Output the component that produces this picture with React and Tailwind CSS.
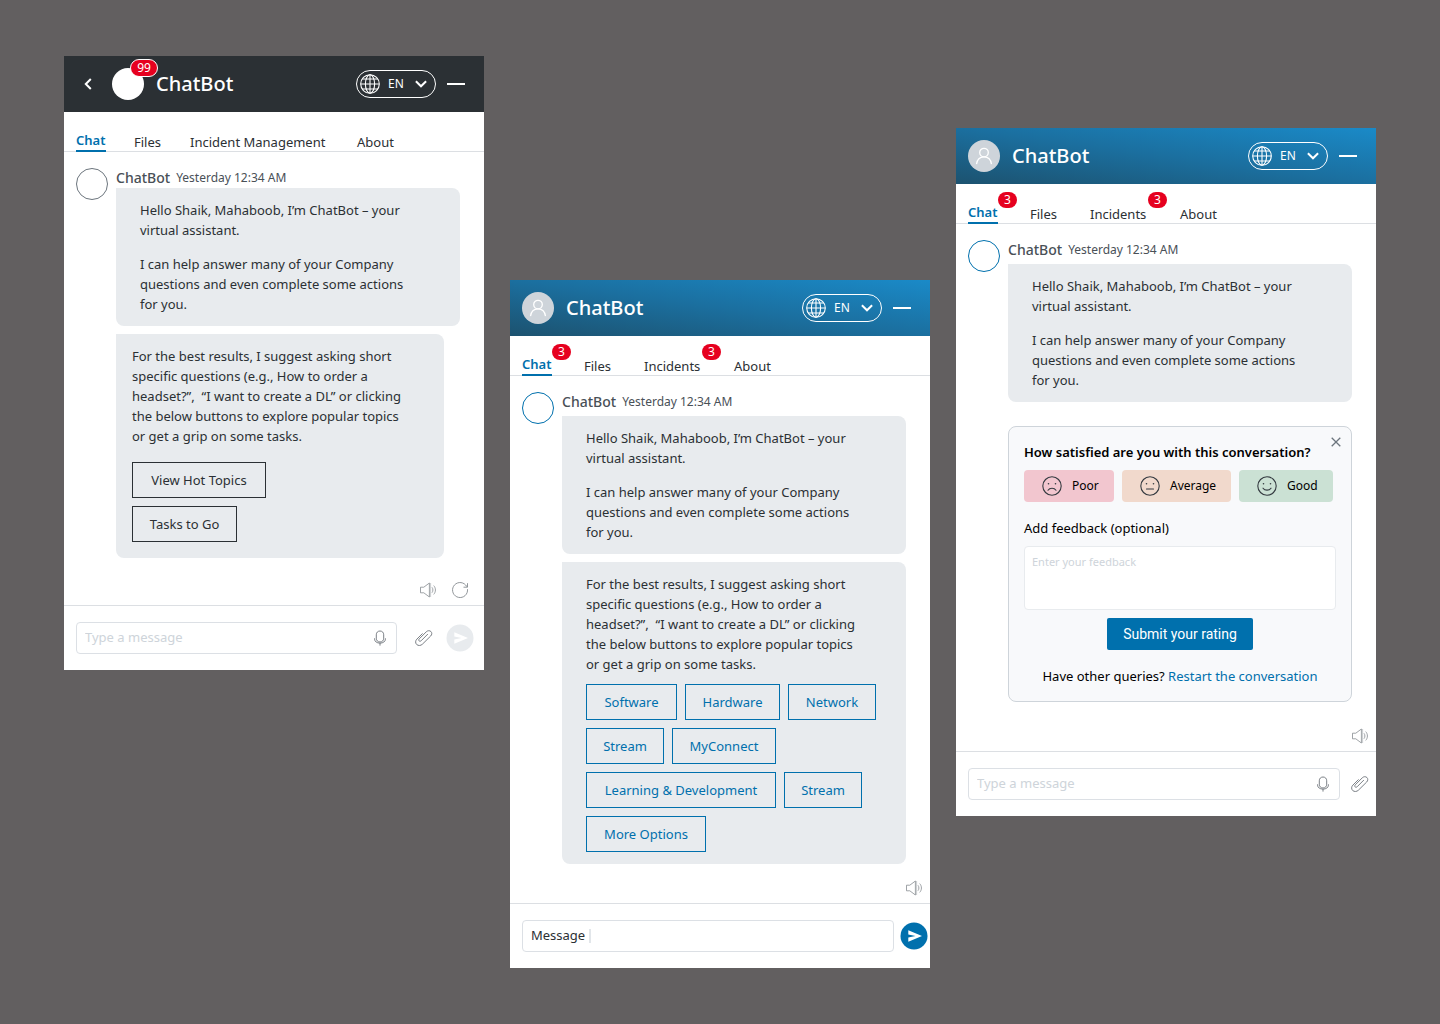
import React from 'react';

function GlobeIcon() {
  return (
    <svg width="20" height="20" viewBox="0 0 20 20" fill="none" stroke="currentColor" strokeWidth="1.1" aria-hidden="true" className="shrink-0">
      <circle cx="10" cy="10" r="9.3" />
      <ellipse cx="10" cy="10" rx="4.6" ry="9.3" />
      <path d="M10 0.7v18.6M0.7 10h18.6M2.4 5h15.2M2.4 15h15.2" />
    </svg>
  );
}

function SpeakerIcon() {
  return (
    <svg width="16" height="16" viewBox="0 0 16 16" fill="none" stroke="currentColor" strokeWidth="0.8" aria-hidden="true">
      <path d="M0.5 5.2h3.3L9.4 1v14L3.8 10.8H0.5z" />
      <path d="M10.6 1v14" opacity="0.55" />
      <path d="M12 5.3c1.2 1.5 1.2 3.9 0 5.4M13.7 3.6c2.3 2.5 2.3 6.3 0 8.8" />
    </svg>
  );
}

function RefreshIcon() {
  return (
    <svg width="16" height="16" viewBox="0 0 16 16" fill="none" stroke="currentColor" strokeWidth="0.9" aria-hidden="true">
      <path d="M15.5 7.2A7.5 7.5 0 1 1 13.6 3L15.4 5" />
      <path d="M15.5 1.2v4h-4" />
    </svg>
  );
}

function MicIcon() {
  return (
    <svg width="16" height="16" viewBox="0 0 16 16" fill="none" stroke="currentColor" strokeWidth="0.9" aria-hidden="true">
      <path d="M8 1C5.700 1 4.300 2.600 4.300 4.800v3.400C4.300 10.400 5.700 12 8 12s3.700-1.600 3.700-3.800V4.800C11.700 2.600 10.300 1 8 1z" />
      <path d="M2.600 8.300v.8c0 2.400 2.200 4 5.400 4s5.400-1.600 5.400-4v-.8M8 13v2.600" />
    </svg>
  );
}

function ClipIcon() {
  return (
    <svg width="18" height="16" viewBox="0 0 18 16" fill="none" stroke="currentColor" strokeWidth="0.9" strokeLinecap="round" aria-hidden="true">
      <path d="M12.600 4.300L6.100 10.800c-.6.600-1.500.600-2 .1s-.5-1.400.1-2L11.300 1.800c1.300-1.300 3.300-1.500 4.600-.3s1.100 3.200-.2 4.500L7.400 14.200c-1.600 1.600-4.200 1.700-5.700.3S.3 10.700 1.900 9.100L7.300 3.700" />
    </svg>
  );
}

function SendIcon() {
  return (
    <svg width="28" height="28" viewBox="0 0 28 28" aria-hidden="true">
      <circle cx="14" cy="14" r="13.500" fill="currentColor" />
      <path d="M8.300 8.300L22 14 8.300 19.700V15.400L15.500 14 8.300 12.600z" fill="#fff" />
    </svg>
  );
}

function FaceIcon({ mouth }) {
  return (
    <svg width="20" height="20" viewBox="0 0 20 20" fill="none" stroke="#343a40" strokeWidth="1.100" strokeLinecap="round" aria-hidden="true" className="shrink-0">
      <circle cx="10" cy="10" r="9.200" />
      <circle cx="6.500" cy="7.800" r="0.800" fill="#343a40" stroke="none" />
      <circle cx="13.500" cy="7.800" r="0.800" fill="#343a40" stroke="none" />
      <path d={mouth} />
    </svg>
  );
}

function UserAvatar() {
  return (
    <span className="flex size-8 items-center justify-center rounded-full bg-[#ced4da] text-white">
      <svg width="18" height="18" viewBox="0 0 18 18" fill="none" stroke="currentColor" strokeWidth="1.300" aria-hidden="true">
        <circle cx="9" cy="5.600" r="4.300" />
        <path d="M1.500 17.200c.6-4.400 3.400-7.300 7.500-7.300s6.900 2.900 7.500 7.300" />
      </svg>
    </span>
  );
}

function Header({ dark }) {
  return (
    <header className={'flex h-14 items-center pr-[19px] pl-3 text-white ' + (dark ? 'bg-[#2b3034]' : 'bg-[linear-gradient(to_top_right,#1c526f,#1b6f9f_50%,#1a8ac8)]')}>
      {dark ? (
        <>
          <button type="button" aria-label="Back" className="mr-3 flex size-6 items-center justify-center">
            <svg width="8" height="12" viewBox="0 0 8 12" fill="none" stroke="currentColor" strokeWidth="2" aria-hidden="true">
              <path d="M6.800 1L1.800 6l5 5" />
            </svg>
          </button>
          <span className="relative size-8 rounded-full bg-white">
            <span className="absolute -top-[9px] left-[18px] flex h-[18px] w-7 items-center justify-center rounded-full border border-white bg-[#e6001f] text-xs">99</span>
          </span>
        </>
      ) : (
        <UserAvatar />
      )}
      <h1 className="ml-3 flex-1 text-xl font-medium">ChatBot</h1>
      <label className="relative mr-[11px] flex h-7 w-20 items-center rounded-full border border-white pl-[3px]">
        <GlobeIcon />
        <select aria-label="Language" defaultValue="EN" className="ml-2 w-6 appearance-none bg-transparent text-xs outline-none">
          <option value="EN">EN</option>
        </select>
        <svg width="12" height="8" viewBox="0 0 12 8" fill="none" stroke="currentColor" strokeWidth="2" aria-hidden="true" className="ml-[3px]">
          <path d="M0.900 1.200L6 6.300l5.100-5.100" />
        </svg>
      </label>
      <button type="button" aria-label="Minimize" className="flex h-6 w-[18px] items-center">
        <span className="h-0.5 w-full bg-white" />
      </button>
    </header>
  );
}

function Tab({ label, width, active, badge }) {
  return (
    <button type="button" className={'relative -mb-px text-left leading-5 whitespace-nowrap ' + width + (active ? ' border-b-2 border-[#0070ad] font-semibold text-[#0070ad]' : '')}>
      {label}
      {badge && (
        <span className={'absolute left-full flex h-4 w-[19px] items-center justify-center rounded-full bg-[#e6001f] text-xs leading-4 font-normal text-white ' + (active ? '-top-2.5' : '-top-3')}>{badge}</span>
      )}
    </button>
  );
}

function Tabs({ dark }) {
  return (
    <nav className={'flex h-10 items-end border-b border-[#dcdfe3] px-3 ' + (dark ? 'gap-7' : 'gap-8')}>
      <Tab label="Chat" width="w-[30px]" active badge={dark ? null : '3'} />
      <Tab label="Files" width="w-7" />
      {dark ? <Tab label="Incident Management" width="w-[139px]" /> : <Tab label="Incidents" width="w-[58px]" badge="3" />}
      <Tab label="About" width="w-10" />
    </nav>
  );
}

function Conversation({ dark, children }) {
  return (
    <div className="flex gap-2 pt-4 pr-6 pl-3">
      <span className={'size-8 shrink-0 rounded-full border ' + (dark ? 'border-[#6c757d]' : 'border-[#0070ad]')} />
      <div className="min-w-0 flex-1">
        <div className={'flex h-5 items-center gap-1.5 text-[#495057] ' + (dark ? '' : 'mb-1')}>
          <span className="text-sm font-medium">ChatBot</span>
          <span className="text-xs">Yesterday 12:34 AM</span>
        </div>
        <div className="rounded-lg rounded-tl-none bg-[#e8ebee] py-3 pr-10 pl-6 leading-5">
          <p className="mb-3.5">Hello Shaik, Mahaboob, I’m ChatBot – your virtual assistant.</p>
          <p>I can help answer many of your Company questions and even complete some actions for you.</p>
        </div>
        {children}
      </div>
    </div>
  );
}

const SUGGESTION = 'For the best results, I suggest asking short specific questions (e.g., How to order a headset?”,\u00a0 “I want to create a DL” or clicking the below buttons to explore popular topics or get a grip on some tasks.';

function Option({ label, width, dark }) {
  return (
    <button type="button" className={'h-9 border text-center ' + width + (dark ? ' border-[#2b3034]' : ' border-[#0070ad] text-[#0070ad]')}>
      {label}
    </button>
  );
}

function Tools({ refresh, spacing }) {
  return (
    <div className={'flex justify-end gap-4 pb-[7px] text-[#868b90] ' + spacing}>
      <button type="button" aria-label="Read aloud"><SpeakerIcon /></button>
      {refresh && <button type="button" aria-label="Restart"><RefreshIcon /></button>}
    </div>
  );
}

function MessageBox() {
  return (
    <div className="flex h-8 min-w-0 flex-1 items-center rounded-sm border border-[#dce0e5] px-2 text-[#6c7278]">
      <input type="text" aria-label="Message" placeholder="Type a message" className="min-w-0 flex-1 outline-none placeholder:text-[#ced4da]" />
      <button type="button" aria-label="Dictate"><MicIcon /></button>
    </div>
  );
}

const ratings = [
  { label: 'Poor', box: 'w-[90px] bg-[#f2c6cf]', mouth: 'M6 14.200c1.800-2.600 6.200-2.600 8 0' },
  { label: 'Average', box: 'w-[109px] bg-[#f1d9cc]', mouth: 'M6.500 13h7' },
  { label: 'Good', box: 'w-[94px] bg-[#cbe1d4]', mouth: 'M6 12.200c1.800 2.600 6.200 2.600 8 0' },
];

function FeedbackCard() {
  return (
    <form className="relative mt-6 flex flex-col rounded-lg border border-[#ced4da] bg-[#f8f9fb] px-[15px] py-[15px] leading-5 text-black" onSubmit={(e) => e.preventDefault()}>
      <button type="button" aria-label="Close" className="absolute top-2.5 right-2.5 text-[#6c757d]">
        <svg width="10" height="10" viewBox="0 0 10 10" fill="none" stroke="currentColor" strokeWidth="1.300" aria-hidden="true">
          <path d="M0.700 0.700l8.600 8.600M9.300 0.700L0.700 9.300" />
        </svg>
      </button>
      <h2 className="font-semibold whitespace-nowrap">How satisfied are you with this conversation?</h2>
      <div className="mt-2 flex gap-2">
        {ratings.map((r) => (
          <button key={r.label} type="button" className={'flex h-8 items-center gap-2.5 rounded-sm pl-[18px] text-xs ' + r.box}>
            <FaceIcon mouth={r.mouth} />
            {r.label}
          </button>
        ))}
      </div>
      <label htmlFor="feedback" className="mt-4">Add feedback (optional)</label>
      <textarea id="feedback" placeholder="Enter your feedback" className="mt-2 h-16 resize-none rounded-sm border border-[#e8ebee] bg-white px-[7px] py-1.5 text-[11px] leading-[18px] outline-none placeholder:text-[#ced4da]" />
      <button type="submit" className="mt-2 h-8 self-center rounded-xs bg-[#0070ad] px-4 font-[Roboto,sans-serif] text-sm text-white">Submit your rating</button>
      <p className="mt-4 text-center">
        Have other queries? <a href="#restart" className="text-[#0070ad]">Restart the conversation</a>
      </p>
    </form>
  );
}

export default function App() {
  return (
    <main className="flex min-h-screen items-start gap-[26px] bg-[#625f60] px-16 pt-14 pb-14 font-['Noto_Sans',sans-serif] text-[13px] text-[#2b3034]">
      <section className="min-w-0 flex-1 bg-white">
        <Header dark />
        <Tabs dark />
        <Conversation dark>
          <div className="mt-2 mr-4 rounded-lg rounded-tl-none bg-[#e8ebee] px-4 pt-3 pb-4 leading-5">
            <p className="pr-4">{SUGGESTION}</p>
            <div className="mt-4 flex flex-col items-start gap-2">
              <Option dark label="View Hot Topics" width="w-[134px]" />
              <Option dark label="Tasks to Go" width="w-[105px]" />
            </div>
          </div>
        </Conversation>
        <Tools refresh spacing="pt-6 pr-4" />
        <footer className="flex items-center border-t border-[#dcdfe3] py-4 pr-2.5 pl-3">
          <MessageBox />
          <button type="button" aria-label="Attach file" className="ml-[18px] text-[#6c7278]"><ClipIcon /></button>
          <button type="button" aria-label="Send" className="ml-[13px] text-[#e8ebee]"><SendIcon /></button>
        </footer>
      </section>

      <section className="mt-56 min-w-0 flex-1 bg-white">
        <Header />
        <Tabs />
        <Conversation>
          <div className="mt-2 rounded-lg rounded-tl-none bg-[#e8ebee] px-6 py-3 leading-5">
            <p className="pr-4">{SUGGESTION}</p>
            <div className="mt-2.5 flex flex-wrap gap-2">
              <Option label="Software" width="w-[91px]" />
              <Option label="Hardware" width="w-[95px]" />
              <Option label="Network" width="w-[88px]" />
              <Option label="Stream" width="w-[78px]" />
              <Option label="MyConnect" width="w-[104px]" />
              <Option label="Learning & Development" width="w-[190px]" />
              <Option label="Stream" width="w-[78px]" />
              <Option label="More Options" width="w-[120px]" />
            </div>
          </div>
        </Conversation>
        <Tools spacing="pt-4 pr-2" />
        <footer className="flex items-center gap-1.5 border-t border-[#dcdfe3] py-4 pr-0.5 pl-3">
          <div className="flex h-8 min-w-0 flex-1 items-center rounded-sm border border-[#dce0e5] px-2">
            <input type="text" aria-label="Message" defaultValue="Message" className="field-sizing-content outline-none" />
            <span className="ml-1 h-3.5 w-0.5 bg-[#e2e6ea]" />
          </div>
          <button type="button" aria-label="Send" className="text-[#0070ad]"><SendIcon /></button>
        </footer>
      </section>

      <section className="mt-18 min-w-0 flex-1 bg-white">
        <Header />
        <Tabs />
        <Conversation>
          <FeedbackCard />
        </Conversation>
        <Tools spacing="pt-[26px] pr-2" />
        <footer className="flex items-center gap-[11px] border-t border-[#dcdfe3] py-4 pr-[7px] pl-3">
          <MessageBox />
          <button type="button" aria-label="Attach file" className="text-[#6c7278]"><ClipIcon /></button>
        </footer>
      </section>
    </main>
  );
}
